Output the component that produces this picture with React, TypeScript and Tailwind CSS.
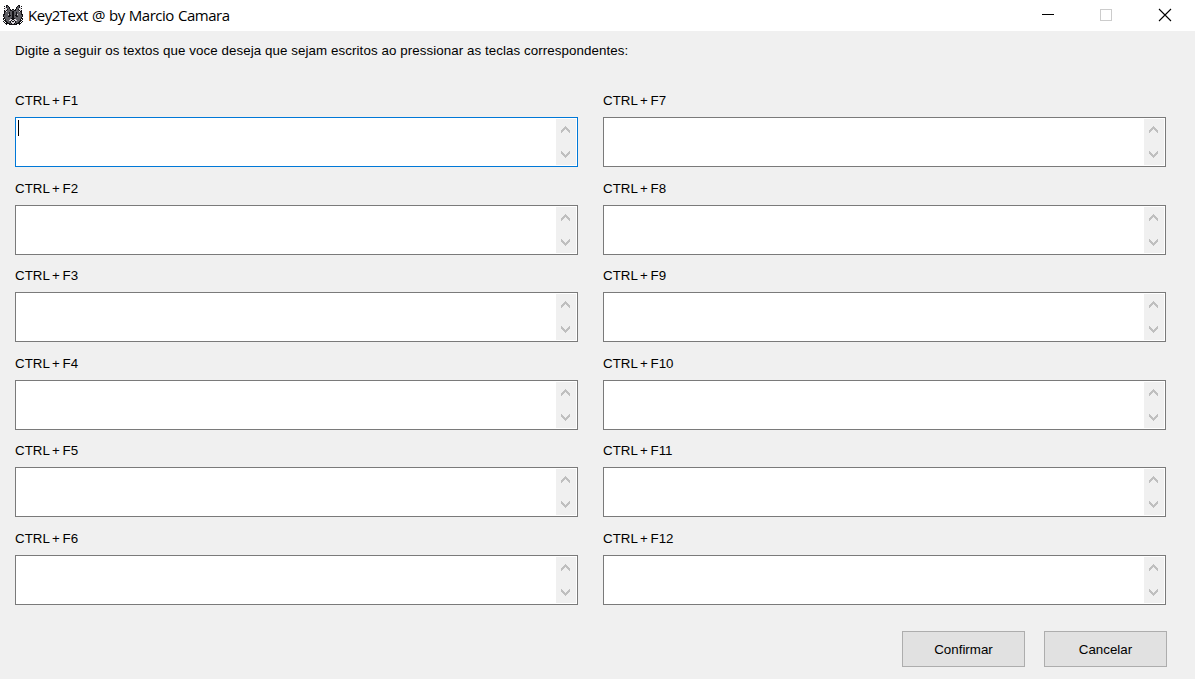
const leftKeys = ["F1", "F2", "F3", "F4", "F5", "F6"];
const rightKeys = ["F7", "F8", "F9", "F10", "F11", "F12"];

const raccoon = [
  "...kk..........kk...",
  ".k.kgk........kgk.k.",
  "..wkggk......kggkw..",
  ".kwwggk......kggwwk.",
  "..wwkggk.kk.kggkww..",
  ".kwkgggkkggkkgggkwk.",
  ".kkwgggggkkgggggwkk.",
  ".kggggkggkkggkggggk.",
  ".kggggkggkkggkggggk.",
  "kkgggwkggkkggkwgggkk",
  "kgggggkkgkkgkkgggggk",
  "kggggkkggkkggkkggggk",
  ".kgggggggkkgggggggk.",
  "kkggggggkkkkggggggkk",
  "k.kggggwwkkwwggggk.k",
  ".kkgggwwkwwkwwgggkk.",
  "k.kkgggkwkkwkgggkk.k",
  ".k.kkggkwwwwkggkk.k.",
  "..kkkkkgkwwkgkkkkk..",
  "...k..kkkkkkkk..k...",
];
const tones: Record<string, string> = { k: "#111114", g: "#5d5d62", w: "#dedade" };

function RaccoonIcon() {
  return (
    <svg width="20" height="20" viewBox="0 0 20 20" shapeRendering="crispEdges" className="shrink-0">
      {raccoon.flatMap((row, y) =>
        row.split("").map((c, x) =>
          c === "." ? null : <rect key={`${x}-${y}`} x={x} y={y} width="1" height="1" fill={tones[c]} />
        )
      )}
    </svg>
  );
}

function Chevron({ down = false }: { down?: boolean }) {
  return (
    <svg width="9" height="7" viewBox="0 0 9 7" fill="#bfbfbf" shapeRendering="crispEdges" className={down ? "rotate-180" : ""}>
      {[4, 3, 2, 1, 0, 1, 2, 3, 4].map((y, x) => (
        <rect key={x} x={x} y={y} width="1" height="3" />
      ))}
    </svg>
  );
}

function Field({ name, focused = false, tall }: { name: string; focused?: boolean; tall: boolean }) {
  return (
    <div className={tall ? "h-[88px]" : "h-[87px]"}>
      <div className="flex h-[26px] items-start pt-px text-[13.33px] leading-[18px] [word-spacing:-1px]">
        <span className="whitespace-nowrap">CTRL + {name}</span>
      </div>
      <div className={`flex h-[50px] justify-between border bg-white p-px ${focused ? "border-[#0078d7]" : "border-[#7a7a7a]"}`}>
        <div className="pl-px pt-px">{focused && <div className="h-4 w-px bg-black" />}</div>
        <div className="flex w-5 flex-col items-center justify-between bg-[#f0f0f0] pb-[7px] pr-px pt-[7px]">
          <Chevron />
          <Chevron down />
        </div>
      </div>
    </div>
  );
}

function Column({ keys }: { keys: string[] }) {
  return (
    <div className="w-[563px]">
      {keys.map((k, i) => (
        <Field key={k} name={k} focused={k === "F1"} tall={i % 2 === 0} />
      ))}
    </div>
  );
}

export default function App() {
  return (
    <div className="flex h-[679px] w-[1195px] flex-col overflow-hidden bg-[#f0f0f0] font-['Liberation_Sans',Arial,sans-serif] text-black">
      <header className="flex h-[31px] items-center justify-between bg-white pl-[3px]">
        <div className="flex items-center gap-[5px]">
          <div className="-mt-px">
            <RaccoonIcon />
          </div>
          <span className="-mt-[2px] whitespace-nowrap font-['Open_Sans',sans-serif] text-[15px] leading-[20px] tracking-[-0.47px] [word-spacing:0.65px]">
            Key2Text @ by Marcio Camara
          </span>
        </div>
        <svg width="175" height="31" viewBox="0 0 175 31" fill="none" shapeRendering="crispEdges">
          <rect x="22" y="14" width="12" height="1" fill="#000" />
          <rect x="80.5" y="9.5" width="11" height="11" stroke="#ccc" />
          <path d="M139 9 151 21M151 9 139 21" stroke="#000" strokeWidth="1.1" shapeRendering="auto" />
        </svg>
      </header>
      <p className="mt-[10px] h-[50px] whitespace-nowrap pl-[15px] pt-px text-[13.33px] leading-[18px] tracking-[0.08px]">
        Digite a seguir os textos que voce deseja que sejam escritos ao pressionar as teclas correspondentes:
      </p>
      <main className="flex gap-[25px] pl-[15px]">
        <Column keys={leftKeys} />
        <Column keys={rightKeys} />
      </main>
      <footer className="mt-[15px] flex justify-end gap-[19px] pr-[28px] text-[13.33px]">
        <button className="h-9 w-[123px] border border-[#adadad] bg-[#e1e1e1] pt-[2px]">Confirmar</button>
        <button className="h-9 w-[123px] border border-[#adadad] bg-[#e1e1e1] pt-[2px]">Cancelar</button>
      </footer>
    </div>
  );
}
